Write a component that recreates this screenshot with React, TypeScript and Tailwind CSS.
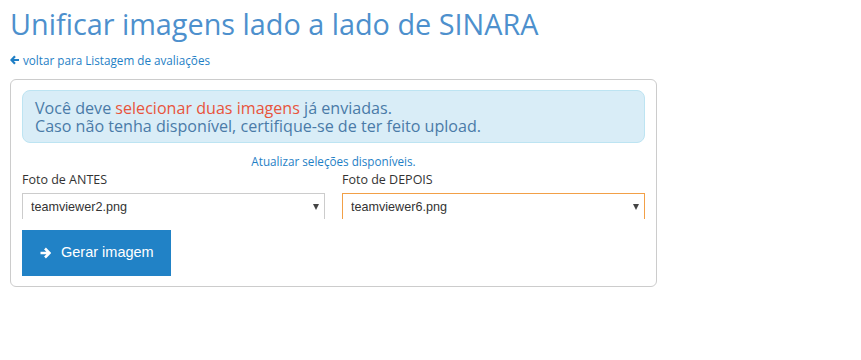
import { useState } from 'react';

/**
 * App — "Unificar imagens" form: pick a before/after photo and generate a side-by-side image.
 */
export default function App() {
  const [antes, setAntes] = useState('teamviewer2.png');
  const [depois, setDepois] = useState('teamviewer6.png');

  return (
    <div className="min-h-[360px] w-[861px] bg-white" style={{ fontFamily: '"Open Sans", sans-serif' }}>
      <div className="px-[10px] pt-[4px]">
        {/* Title */}
        <h1 className="text-[28.8px] leading-[40px] font-normal text-[#4d90cd]">
          Unificar imagens lado a lado de SINARA
        </h1>

        {/* Back link */}
        <a href="#" className="mt-[8px] flex items-center gap-[3px] text-[11.7px] leading-[16px] text-[#1f7fc6]">
          <svg width="10" height="10" viewBox="0 0 10 10" className="shrink-0">
            <path d="M5 1.2 1.4 5 5 8.8M1.6 5H9" stroke="#1f7fc6" strokeWidth="2.2" fill="none" />
          </svg>
          voltar para Listagem de avaliações
        </a>

        {/* Card */}
        <div className="mt-[11px] w-[647px] rounded-[6px] border border-[#cccccc] px-[11px] pt-[10px] pb-[10px]">
          <div className="rounded-[8px] border border-[#bde4f2] bg-[#d9edf7] px-[12px] pt-[8px] pb-[7px] text-[16.1px] leading-[18px] text-[#4a7ba8]">
            <p>
              Você deve <span className="text-[#e8543c]">selecionar duas imagens</span> já enviadas.
            </p>
            <p>Caso não tenha disponível, certifique-se de ter feito upload.</p>
          </div>

          <div className="mt-[10px] text-center text-[11.7px] leading-[16px]">
            <a href="#" className="text-[#1f7fc6]">
              Atualizar seleções disponíveis.
            </a>
          </div>

          <div className="mt-[2px] grid grid-cols-2 gap-[17px]">
            <label className="flex flex-col">
              <span className="text-[12.5px] leading-[18px] text-[#333333]">Foto de ANTES</span>
              <Select value={antes} onChange={setAntes} />
            </label>
            <label className="flex flex-col">
              <span className="text-[12.5px] leading-[18px] text-[#333333]">Foto de DEPOIS</span>
              <Select value={depois} onChange={setDepois} focused />
            </label>
          </div>

          <button
            className="mt-[11px] flex h-[46px] w-[149px] items-center gap-[10px] bg-[#2182c6] pl-[17px] text-[14.5px] text-white"
            style={{ fontFamily: '"Liberation Sans", Arial, sans-serif' }}
          >
            <svg width="12" height="12" viewBox="0 0 12 12" className="shrink-0">
              <path d="M6 1.5 10.5 6 6 10.5M10 6H1.5" stroke="white" strokeWidth="2.6" fill="none" />
            </svg>
            Gerar imagem
          </button>
        </div>
      </div>
    </div>
  );
}

function Select({ value, onChange, focused }: { value: string; onChange: (v: string) => void; focused?: boolean }) {
  return (
    <div
      className={`relative mt-[4px] h-[26px] border ${focused ? 'border-[#f2a047]' : 'border-[#cccccc]'}`}
      style={{ fontFamily: '"Liberation Sans", Arial, sans-serif' }}
    >
      <select
        value={value}
        onChange={(e) => onChange(e.target.value)}
        className="h-full w-full appearance-none bg-white pl-[8px] text-[12.6px] text-[#333333] outline-none"
      >
        <option>teamviewer2.png</option>
        <option>teamviewer6.png</option>
      </select>
      {/* caret */}
      <span className="pointer-events-none absolute right-[5px] top-[10px] h-0 w-0 border-x-[3.5px] border-t-[6px] border-x-transparent border-t-[#444444]" />
    </div>
  );
}
